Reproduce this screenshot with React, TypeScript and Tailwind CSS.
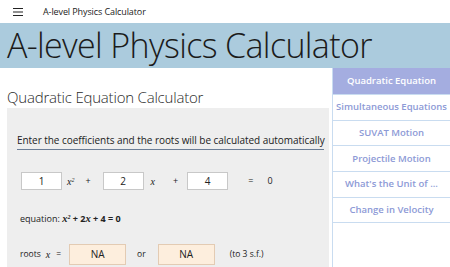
import React from 'react'

const navItems = [
  'Quadratic Equation',
  'Simultaneous Equations',
  'SUVAT Motion',
  'Projectile Motion',
  "What's the Unit of ...",
  'Change in Velocity',
]

function CoefBox({ value }: { value: string }) {
  return (
    <div className="w-[41px] h-[18px] bg-white border border-[#c8c8c8] flex items-center justify-center text-[10px] text-[#222]">
      {value}
    </div>
  )
}

function RootBox() {
  return (
    <div className="w-[57px] h-[21px] bg-[#fdeedd] border border-[#e3cbb3] flex items-center justify-center text-[10px] text-[#222]">
      NA
    </div>
  )
}

export default function App() {
  return (
    <div className="w-[450px] h-[267px] overflow-hidden bg-white flex flex-col font-['Open_Sans',sans-serif] text-[#222]">
      {/* title bar */}
      <div className="h-[23px] flex items-center shrink-0">
        <svg className="ml-[13px]" width="10" height="8" viewBox="0 0 10 8">
          <rect x="0" y="0" width="10" height="1" fill="#222" />
          <rect x="0" y="3.5" width="10" height="1" fill="#222" />
          <rect x="0" y="7" width="10" height="1" fill="#222" />
        </svg>
        <span className="ml-[20px] text-[9px] tracking-[-0.1px]">A-level Physics Calculator</span>
      </div>

      {/* header band */}
      <div className="h-[45px] bg-[#abcbdd] shrink-0 flex items-center pl-[7px]">
        <span className="text-[34px] font-light leading-none tracking-[-0.65px] text-[#1b1b1b] -mt-[2px]">A-level Physics Calculator</span>
      </div>

      <div className="flex flex-1 min-h-0">
        {/* main content */}
        <div className="w-[332px] flex flex-col">
          <div className="h-[40px] pt-[19px] pl-[7px] text-[15px] leading-[20px] tracking-[-0.2px] text-[#2a2a2a] font-light">
            Quadratic Equation Calculator
          </div>
          <div className="flex-1 ml-[7px] mr-[3px] bg-[#eeeeee] pl-[10px] pr-[5px] pt-[26px]">
            <div className="text-[10px] leading-[13px] tracking-[-0.05px] border-b border-[#6b7d96] pb-[2px] whitespace-nowrap">
              Enter the coefficients and the roots will be calculated automatically
            </div>
            <div className="flex items-center mt-[22px] ml-[4px] text-[9px]">
              <CoefBox value="1" />
              <span className="ml-[5px] italic font-['Liberation_Serif',serif] text-[10px]">x<sup className="text-[6px]">2</sup></span>
              <span className="ml-[11px]">+</span>
              <div className="ml-[12px]"><CoefBox value="2" /></div>
              <span className="ml-[7px] italic font-['Liberation_Serif',serif] text-[10px]">x</span>
              <span className="ml-[18px]">+</span>
              <div className="ml-[9px]"><CoefBox value="4" /></div>
              <span className="ml-[20px]">=</span>
              <span className="ml-[14px]">0</span>
            </div>
            <div className="mt-[23px] ml-[3px] text-[9px] leading-[12px]">
              equation: <span className="font-bold italic font-['Liberation_Serif',serif] text-[10.5px]">x<sup className="text-[6px]">2</sup></span>
              <span className="font-bold"> + 2</span><span className="font-bold italic font-['Liberation_Serif',serif] text-[10.5px]">x</span>
              <span className="font-bold"> + 4 = 0</span>
            </div>
            <div className="flex items-center mt-[19px] ml-[3px] text-[8.5px]">
              <span>roots</span>
              <span className="ml-[5px] italic font-['Liberation_Serif',serif] text-[10px]">x</span>
              <span className="ml-[6px]">=</span>
              <div className="ml-[8px]"><RootBox /></div>
              <span className="ml-[11px]">or</span>
              <div className="ml-[12px]"><RootBox /></div>
              <span className="ml-[15px]">(to 3 s.f.)</span>
            </div>
          </div>
        </div>

        {/* nav */}
        <div className="w-[118px] border-l border-[#c9dcf0] flex flex-col">
          {navItems.map((item, i) => (
            <div
              key={item}
              className={
                i === 0
                  ? 'h-[27px] bg-[#a4ade0] text-white flex items-center justify-center text-[9.5px] font-semibold border-b border-[#c9dcf0]'
                  : 'h-[25.7px] text-[#8d9ad6] flex items-center justify-center text-[9.5px] font-semibold border-b border-[#c9dcf0] whitespace-nowrap'
              }
            >
              {item}
            </div>
          ))}
        </div>
      </div>
    </div>
  )
}
